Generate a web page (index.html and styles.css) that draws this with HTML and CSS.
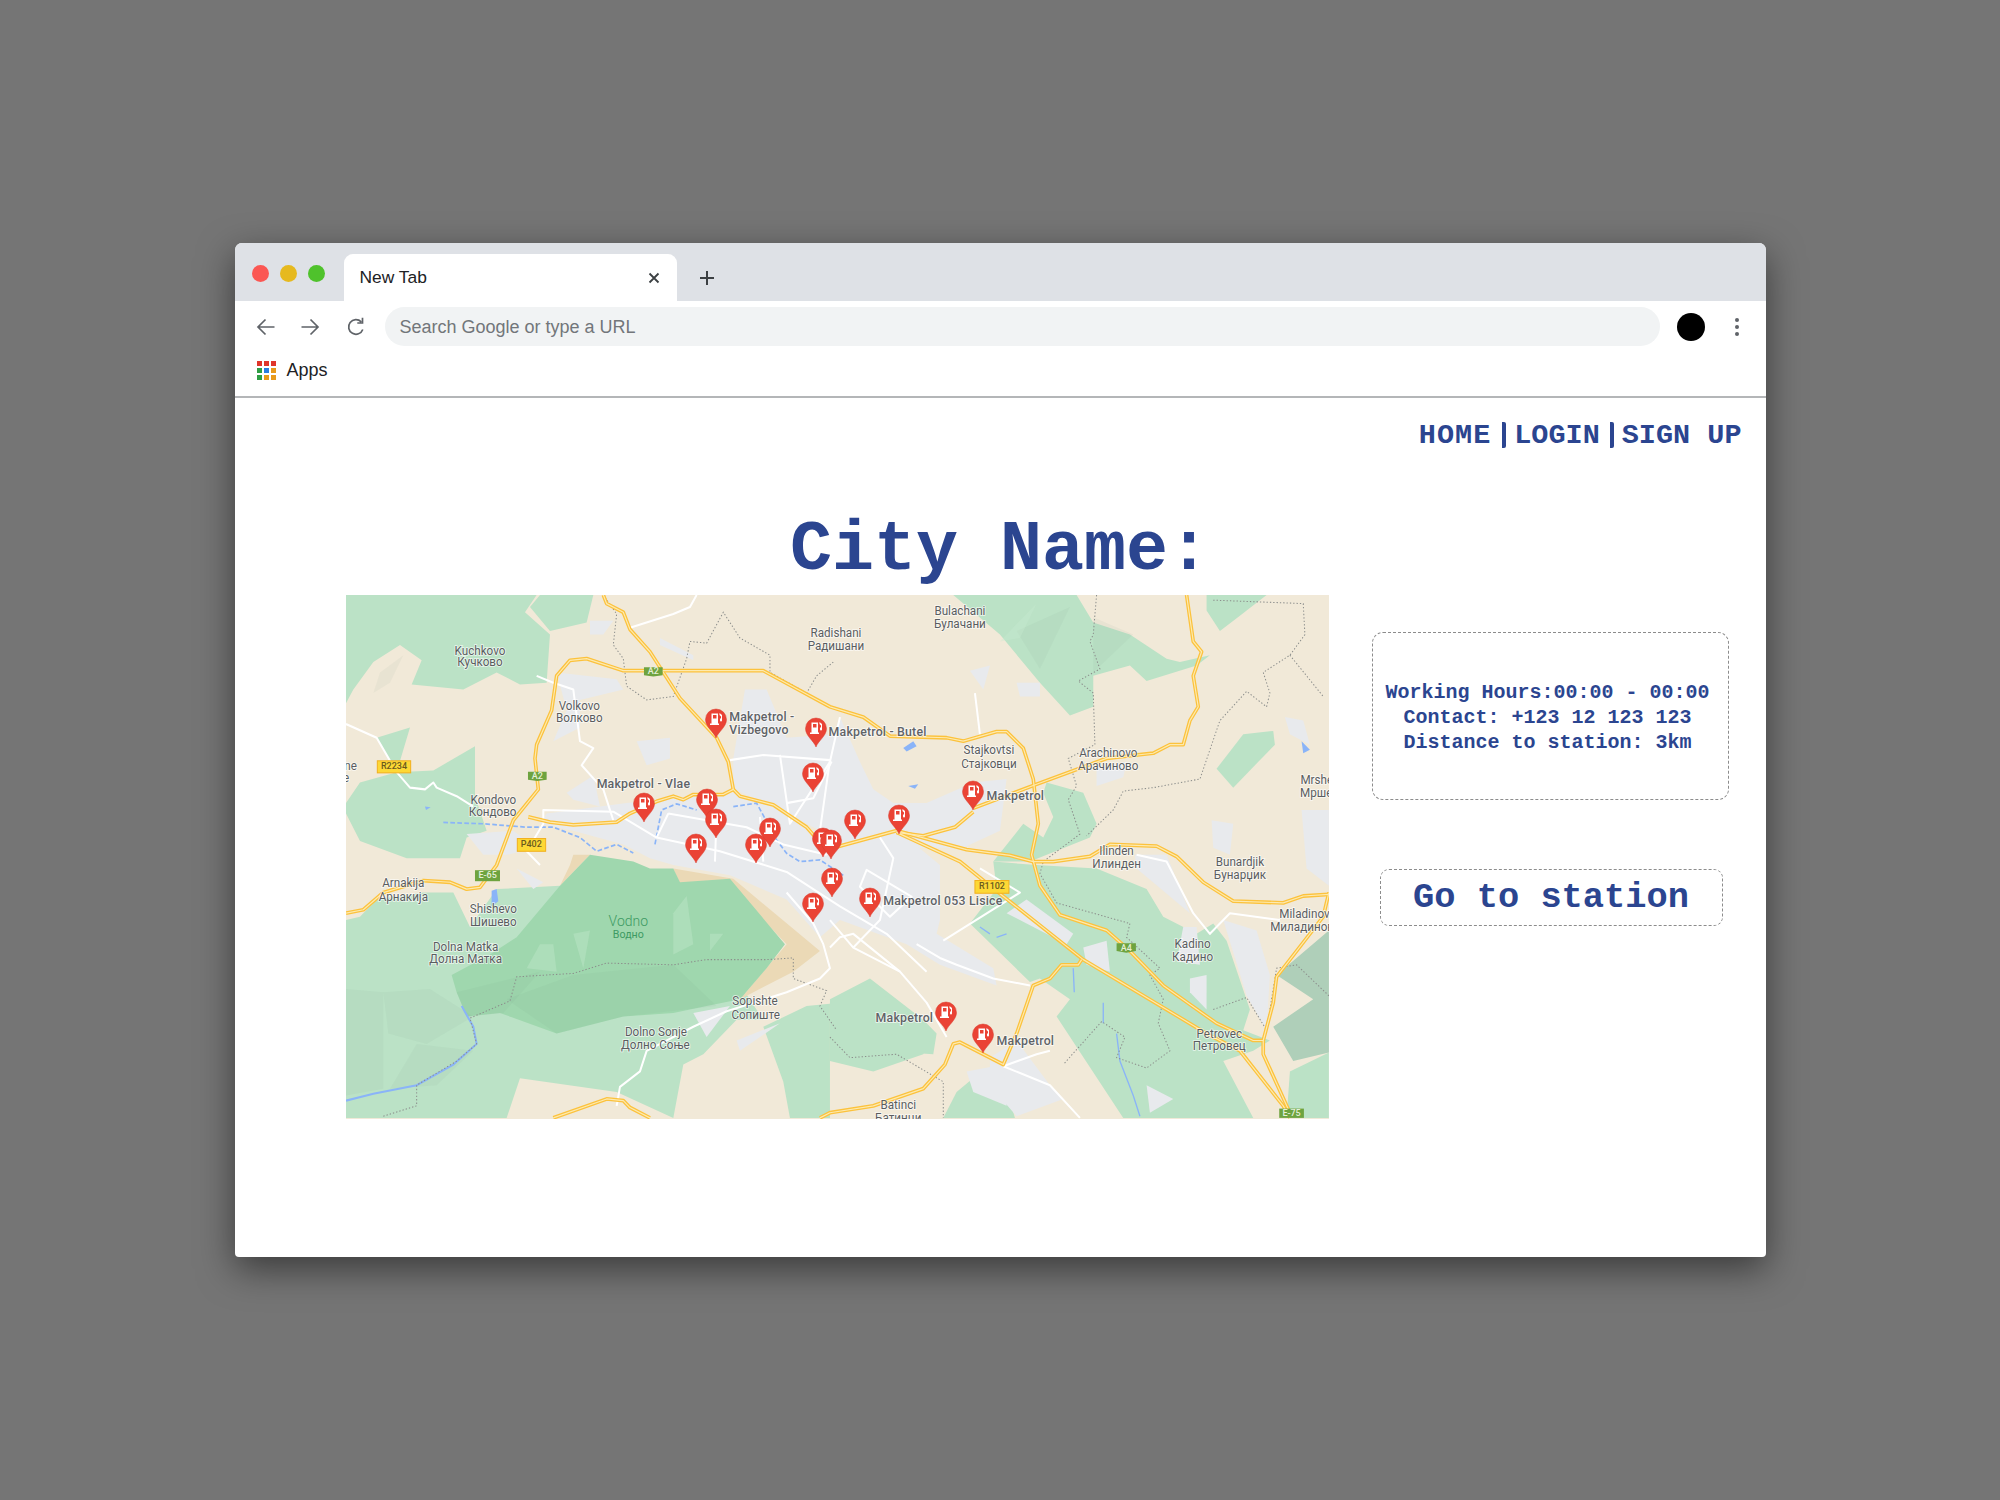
FILE: index.html
```html
<!DOCTYPE html>
<html lang="en">
<head>
  <meta charset="UTF-8" />
  <title>City Name</title>
  <link rel="stylesheet" href="styles.css">
</head>
<body>

  <div class="window">
    <div class="tabstrip">
      <div class="lights">
        <span class="light red"></span>
        <span class="light yellow"></span>
        <span class="light green"></span>
      </div>
      <div class="tab">
        <span>New Tab</span>
        <svg class="tab-close" viewBox="0 0 12 12"><path d="M1.5 1.5l9 9M10.5 1.5l-9 9"/></svg>
      </div>
      <svg class="tab-new" viewBox="0 0 16 16"><path d="M8 1v14M1 8h14"/></svg>
    </div>

    <div class="toolbar">
      <svg class="nav-icon" viewBox="0 0 24 24"><path d="M20.5 12H4M11.5 4.5L4 12l7.5 7.5"/></svg>
      <svg class="nav-icon" viewBox="0 0 24 24"><path d="M3.500 12H20M12.500 4.500L20 12l-7.500 7.500"/></svg>
      <svg class="nav-icon" viewBox="0 0 24 24"><path d="M18.800 14.500A7.300 7.300 0 1 1 17.200 6.900M18.500 2.800v5.200h-5.200"/></svg>
      <div class="address">Search Google or type a URL</div>
      <span class="avatar"></span>
      <span class="dots"><i></i><i></i><i></i></span>
    </div>

    <div class="bookmarks">
      <div class="apps-grid">
        <i class="c-red"></i><i class="c-red"></i><i class="c-red"></i>
        <i class="c-green"></i><i class="c-blue"></i><i class="c-orange"></i>
        <i class="c-green"></i><i class="c-orange"></i><i class="c-orange"></i>
      </div>
      <span>Apps</span>
    </div>

    <div class="page">
      <nav class="topnav">
        <a href="#">HOME</a>
        <a href="#">LOGIN</a>
        <a href="#">SIGN UP</a>
      </nav>

      <h1>City Name:</h1>

      <div class="content">
        <div class="map">
          <svg class="map-svg" viewBox="0 0 983 524">
            <defs>
              <symbol id="pin" overflow="visible">
                <path class="pin-body" d="M0 0C-2-6-10.500-11-10.500-18.500a10.500 10.500 0 1 1 21 0C10.500-11 2-6 0 0Z"/>
                <path class="pin-pump" d="M-4.500-24.500h6.500v10h1v1.500h-9v-1.500h1.500zM-3-23v3.500h3.500V-23zM3.500-25l2.500 2v5.500a1 1 0 0 1-2 0v-2h1v-2l-1.500-1.500z"/>
              </symbol>

              <g id="highways">
                <path d="M790 15L800 40 850 65 870 115 930 180 960 225 1020 315 1130 430 1165 500 1180 580 1200 600 1300 625 1400 690 1450 745"/>
                <path d="M18 940L70 930 130 880 250 845 330 850 380 870 420 865 470 800 520 670 595 580 585 490 590 450 635 350 650 250 690 205 740 200 850 235 970 235 1270 235 1470 340 1570 370 1650 425 1820 430 1870 440 1970 412 2000 412 2050 460 2080 550 2095 680 2075 770 2100 860 2160 945 2300 990 2370 1050 2470 1150 2630 1260 2740 1310 2770 1310 2800 1200 2810 1125 2950 950 2967 880"/>
                <path d="M565 660L630 675 700 683 830 675 870 650 950 615 1000 600 1030 610 1060 595 1150 595 1180 580"/>
                <path d="M1480 750L1670 700 1880 755 2010 772 2080 790 2140 790 2250 775 2310 740 2450 745 2510 775 2590 850 2680 905 2830 910 2890 890 2967 885"/>
                <path d="M1670 705L1860 790 1950 860 2230 1075 2480 1220 2600 1290 2700 1340 2830 1500 2850 1535"/>
                <path d="M2770 1310L2770 1350 2850 1520"/>
                <path d="M1900 645L1845 690 1750 715 1670 705"/>
                <path d="M1900 635L2090 565 2300 490 2440 475 2490 450 2530 450 2550 380 2575 340 2560 250 2585 180 2560 150 2540 15"/>
                <path d="M2225 1075L2215 1090 2165 1090 2130 1130 2080 1150 2030 1290 1990 1380 1930 1350 1860 1315 1840 1320 1815 1380 1750 1450 1600 1500 1470 1520 1440 1535"/>
                <path d="M640 1535L800 1480 850 1485 870 1505 930 1535"/>
              </g>
            </defs>

            <rect class="land" width="983" height="524"/>

            <g transform="scale(.3333 .344) translate(-18 -15)">
              <!-- green areas -->
              <g class="park">
                <polygon points="18,330 40,290 100,210 180,160 245,205 215,275 370,290 470,240 540,275 620,270 630,130 555,65 590,15 18,15"/>
                <polygon points="630,120 740,95 760,15 600,15 570,50"/>
                <polygon points="18,620 60,560 170,530 110,430 210,400 170,530 280,525 405,455 405,600 440,700 380,720 360,780 200,780 60,730 18,650"/>
                <polygon points="18,960 60,950 110,900 250,880 340,880 390,980 470,870 660,860 1100,1000 1270,1250 1190,1250 1090,1350 1030,1380 1000,1535 830,1460 540,1420 500,1535 18,1535"/>
                <polygon points="1270,1270 1400,1210 1500,1200 1620,1340 1780,1350 1790,1290 1750,1250 1590,1130 1470,1190 1470,1535 1350,1535 1330,1430"/>
                <polygon points="1840,15 2210,15 2260,95 2370,130 2480,200 2520,210 2610,190 2570,220 2420,265 2370,220 2260,250 2260,340 2190,365 2100,270 1980,130"/>
                <polygon points="2600,15 2780,15 2700,75 2640,120 2600,60"/>
                <polygon points="2630,520 2710,420 2800,410 2805,450 2680,575"/>
                <polygon points="1960,790 2050,680 2110,720 2140,660 2110,590 2120,560 2230,590 2270,680 2250,720 2070,790"/>
                <polygon points="2090,800 2270,810 2420,870 2470,950 2570,1000 2620,970 2660,1020 2730,1220 2710,1280 2790,1310 2740,1340 2650,1370 2740,1535 2350,1535 2150,1240 2190,1190 2100,1130 2070,1140 1890,970 1970,870 1960,790"/>
                <polygon points="1590,1140 1690,1230 1780,1290 1750,1350 1600,1400 1470,1370 1470,1200"/>
                <polygon points="1810,1535 1850,1460 1930,1395 2000,1450 2025,1535"/>
                <polygon points="2850,1400 2967,1345 2967,1535 2840,1535"/>
              </g>

              <polygon class="hill-dark" points="2967,990 2810,1120 2920,1190 2800,1270 2860,1370 2967,1345"/>
              <polygon class="scrub" points="1000,810 1180,840 1440,1050 1360,1110 1200,1190 1340,1030 1170,860 1020,860"/>
              <polygon class="scrub" points="700,770 750,770 660,860 690,800"/>

              <!-- vodno -->
              <polygon class="park-dark" points="530,1010 660,860 750,770 880,790 930,810 1000,810 1020,850 1170,840 1300,990 1335,1030 1280,1100 1200,1190 1100,1210 1000,1230 850,1240 650,1290 480,1230 380,1240 350,1170 335,1120 450,1060"/>

              <!-- terrain shading -->
              <g class="shade">
                <polygon points="18,1160 130,1170 130,1450 18,1470"/>
                <polygon points="130,1170 270,1160 400,1240 260,1320 145,1290"/>
                <polygon points="230,1320 400,1340 290,1440 150,1450"/>
                <polygon points="350,1170 600,1110 490,1230 380,1240"/>
                <polygon points="700,1120 1000,1090 1130,1210 850,1240 650,1290 500,1190"/>
                <polygon points="2030,120 2190,50 2150,130 2100,230"/>
                <polygon points="2260,80 2380,130 2260,240"/>
                <polygon points="120,240 190,190 150,270 100,300"/>
              </g>
              <g class="light-shade">
                <polygon points="700,1000 750,990 730,1100"/>
                <polygon points="1000,940 1040,890 1060,1030 1000,1060"/>
                <polygon points="600,1030 640,1030 650,1110 560,1100"/>
                <polygon points="1110,1000 1150,1000 1110,1050"/>
                <polygon points="1980,150 2090,40 2040,140"/>
              </g>

              <!-- built up areas -->
              <g class="urban">
                <polygon points="620,650 860,620 1180,590 1280,620 1420,700 1700,720 1800,800 1800,960 1790,1000 1960,1100 1970,1150 1800,1090 1700,1030 1500,960 1440,1010 1340,900 1170,830 1000,800 930,780 850,740 700,700 600,680"/>
                <polygon points="1180,490 1215,290 1280,290 1340,430 1480,420 1500,370 1560,500 1600,580 1660,620 1760,620 1900,560 2000,550 1980,700 1870,750 1660,750 1440,700 1280,620 1180,580"/>
                <polygon points="650,240 830,260 850,290 720,320 720,400 640,440 680,350"/>
                <polygon points="960,140 1060,190 1060,205 960,160"/>
                <polygon points="750,90 820,90 790,130 750,130"/>
                <polygon points="890,440 990,430 990,490 920,510"/>
                <polygon points="680,590 760,540 780,630 700,610"/>
                <polygon points="380,710 520,700 590,750 500,770 430,770"/>
                <polygon points="530,810 610,850 580,870"/>
                <polygon points="2615,670 2680,680 2670,770 2620,750"/>
                <polygon points="2650,960 2750,990 2790,1120 2780,1280 2720,1180"/>
                <polygon points="2530,980 2570,980 2580,1090 2510,1080"/>
                <polygon points="2230,1040 2300,1020 2310,1110 2240,1090"/>
                <polygon points="2550,1130 2600,1120 2600,1220 2550,1170"/>
                <polygon points="2420,1440 2500,1480 2430,1520"/>
                <polygon points="1950,1360 2030,1310 2130,1440 2170,1480 2030,1530 1950,1440"/>
                <polygon points="1880,1400 1990,1380 2000,1500 1900,1460"/>
                <polygon points="2385,770 2480,770 2550,940 2390,810"/>
                <polygon points="2835,370 2890,380 2910,450 2850,420"/>
                <polygon points="2885,640 2967,640 2967,860 2900,810"/>
                <polygon points="1890,235 1950,220 1930,290"/>
                <polygon points="2030,270 2100,270 2100,310 2040,310"/>
                <polygon points="2270,520 2360,500 2350,545 2270,570"/>
                <polygon points="1060,1230 1170,1210 1100,1300"/>
                <polygon points="1190,1310 1320,1260 1200,1340"/>
                <polygon points="2000,940 2060,900 2200,1000 2180,1030"/>
              </g>

              <!-- water -->
              <g class="water">
                <path d="M18 1485L100 1465 230 1440 340 1380 410 1320 400 1270 365 1210"/>
                <path class="thin" d="M2290 1200v60M2330 1290l10 80 40 100 20 60"/>
                <path class="thin" d="M2200 1100l3 70M1920 980l30 20M2000 1000l-30 10"/>
              </g>
              <g class="water dashed">
                <path d="M310 676L430 680 560 690 640 690 720 720 770 760 830 740 880 765"/>
                <path d="M945 740L965 640 1010 622 1070 640M1180 630L1250 620 1310 727 1340 766 1380 790 1440 785 1510 830"/>
              </g>
              <g class="lake">
                <polygon points="455,875 470,870 475,905 455,920"/>
                <polygon points="1690,460 1720,440 1730,455 1700,470"/>
                <polygon points="2885,440 2910,465 2890,475"/>
                <polygon points="1705,570 1735,565 1725,578"/>
                <polygon points="255,630 272,632 258,640"/>
              </g>

              <!-- borders -->
              <g class="border">
                <path d="M790 15L830 70 820 160 850 200 860 280 920 320 1000 310 1040 200 1050 150 1100 155 1150 65 1200 140 1290 190 1290 240 1400 300 1430 250 1480 210"/>
                <path d="M130 1530L230 1500 230 1440 350 1370 410 1320 390 1245 510 1195 530 1125 700 1115 800 1085 1000 1090 1100 1075 1280 1075 1360 1070 1360 1130 1460 1165 1440 1210 1490 1280"/>
                <path d="M2270 15L2260 130 2250 150 2280 230 2215 265 2260 300 2265 450 2185 490 2210 570 2185 610 2220 710 2110 790 2100 825 2150 910 2370 970 2360 1010 2460 1100 2430 1120 2470 1190 2455 1260 2490 1340 2420 1390 2330 1360 2355 1300 2285 1255 2170 1380"/>
                <path d="M2620 30L2890 40 2895 130 2850 190 2770 240 2790 300 2780 340 2720 295 2640 380 2580 550 2440 575 2350 585 2320 640 2240 715"/>
                <path d="M2850 190L2950 310"/>
                <path d="M1470 1300L1530 1360 1670 1350 1810 1430 1810 1535"/>
                <path d="M2620 1220L2720 1185 2780 1280 2810 1100 2870 1090 2967 1180"/>
              </g>

              <!-- streets -->
              <g class="street">
                <path d="M18 390L110 430 170 530 210 575 255 580 280 560 290 575 350 600 400 630"/>
                <path d="M870 110L1000 70 1050 50 1070 15"/>
                <path d="M590 250L640 270 700 290 720 440 760 460 725 510 790 580 820 670"/>
                <path d="M830 1500L840 1445 900 1400 920 1340 1060 1270 1160 1225 1340 1170 1440 1130 1470 1100 1450 1030 1420 970 1340 880"/>
                <path d="M600 800L560 760 610 680 610 640 820 645 950 720 1140 760 1340 820 1500 920 1640 1000 1760 1110"/>
                <path d="M1170 495L1270 480 1470 495 1440 700M1320 480L1350 680 1470 500 1500 370"/>
                <path d="M1340 620L1420 606 1475 499"/>
                <path d="M985 650L950 720M985 650L1220 690 1330 740 1460 770M1130 650L1125 790M1270 790L1260 660"/>
                <path d="M1470 960L1540 1040 1680 1110 1760 1200 1820 1300"/>
                <path d="M1580 814L1715 892 1650 950 1560 863Z"/>
                <path d="M1920 810L2040 880 1810 1020M1470 1040L1500 1010 1540 1000 1680 1110"/>
                <path d="M1905 300L1920 420M1620 720L1660 780 1620 960 1540 1040"/>
                <path d="M2390 770L2480 790 2560 940 2610 1000 2670 940 2820 960"/>
                <path d="M1990 1385L2130 1440 2220 1535M1990 1385L2090 1350 2130 1340"/>
                <path d="M1730 1030L1800 1070 1850 1090 1960 1130 2070 1150"/>
              </g>

              <use href="#highways" class="road-edge"/>
              <use href="#highways" class="road-core"/>

              <!-- shields -->
              <g class="shield-green">
                <polygon points="912,225 968,225 968,248 940,252 912,248"/>
                <polygon points="564,529 620,529 620,552 592,556 564,552"/>
                <rect x="405" y="815" width="75" height="32"/>
                <polygon points="2330,1027 2388,1027 2388,1050 2359,1055 2330,1050"/>
                <rect x="2818" y="1508" width="74" height="27"/>
              </g>
              <g class="shield-yellow">
                <rect x="112" y="497" width="100" height="35"/>
                <rect x="532" y="723" width="85" height="37"/>
                <rect x="1905" y="845" width="102" height="37"/>
              </g>
              <g class="shield-text light">
                <text x="940" y="245">A2</text>
                <text x="592" y="549">A2</text>
                <text x="443" y="838">E-65</text>
                <text x="2359" y="1049">A4</text>
                <text x="2855" y="1529">E-75</text>
              </g>
              <g class="shield-text dark">
                <text x="162" y="522">R2234</text>
                <text x="574" y="748">P402</text>
                <text x="1956" y="870">R1102</text>
              </g>

              <!-- place names -->
              <g class="place">
                <text x="420" y="188">Kuchkovo</text><text x="420" y="222">Кучково</text>
                <text x="718" y="350">Volkovo</text><text x="718" y="385">Волково</text>
                <text x="460" y="622">Kondovo</text><text x="458" y="658">Кондово</text>
                <text x="190" y="864">Arnakija</text><text x="190" y="904">Арнакија</text>
                <text x="460" y="940">Shishevo</text><text x="460" y="977">Шишево</text>
                <text x="377" y="1050">Dolna Matka</text><text x="377" y="1085">Долна Матка</text>
                <text x="1245" y="1208">Sopishte</text><text x="1247" y="1248">Сопиште</text>
                <text x="948" y="1296">Dolno Sonje</text><text x="946" y="1335">Долно Соње</text>
                <text x="1488" y="138">Radishani</text><text x="1488" y="176">Радишани</text>
                <text x="1860" y="74">Bulachani</text><text x="1860" y="112">Булачани</text>
                <text x="1947" y="478">Stajkovtsi</text><text x="1947" y="518">Стајковци</text>
                <text x="2305" y="486">Arachinovo</text><text x="2305" y="525">Арачиново</text>
                <text x="2330" y="772">Ilinden</text><text x="2330" y="810">Илинден</text>
                <text x="2700" y="803">Bunardjik</text><text x="2700" y="842">Бунарџик</text>
                <text x="2558" y="1041">Kadino</text><text x="2558" y="1079">Кадино</text>
                <text x="2638" y="1303">Petrovec</text><text x="2638" y="1338">Петровец</text>
                <text x="1675" y="1510">Batinci</text><text x="1675" y="1547">Батинци</text>
                <text x="2949" y="565">Mrshevo</text><text x="2949" y="603">Мршево</text>
                <text x="2907" y="955">Miladinovci</text><text x="2907" y="993">Миладиновци</text>
                <text x="32" y="525">ne</text><text x="18" y="558">e</text>
              </g>
              <text class="place-green big" x="865" y="978">Vodno</text>
              <text class="place-green" x="865" y="1012">Водно</text>

              <g class="station">
                <text x="1168" y="382">Makpetrol -</text>
                <text x="1168" y="420">Vizbegovo</text>
                <text x="770" y="575">Makpetrol - Vlae</text>
                <text x="1466" y="425">Makpetrol - Butel</text>
                <text x="1940" y="610">Makpetrol</text>
                <text x="1630" y="917">Makpetrol 053 Lisice</text>
                <text x="1607" y="1257">Makpetrol</text>
                <text x="1970" y="1322">Makpetrol</text>
              </g>
            </g>

            <use href="#pin" x="370" y="143"/>
            <use href="#pin" x="470" y="152"/>
            <use href="#pin" x="467" y="197"/>
            <use href="#pin" x="298" y="227"/>
            <use href="#pin" x="361" y="223"/>
            <use href="#pin" x="370" y="243"/>
            <use href="#pin" x="350" y="268"/>
            <use href="#pin" x="424" y="252"/>
            <use href="#pin" x="410" y="268"/>
            <use href="#pin" x="477" y="262"/>
            <use href="#pin" x="485" y="264"/>
            <use href="#pin" x="509" y="244"/>
            <use href="#pin" x="553" y="239"/>
            <use href="#pin" x="627" y="215"/>
            <use href="#pin" x="486" y="302"/>
            <use href="#pin" x="467" y="327"/>
            <use href="#pin" x="524" y="322"/>
            <use href="#pin" x="600" y="436"/>
            <use href="#pin" x="637" y="458"/>
          </svg>
        </div>

        <aside class="side">
          <div class="info">
            Working Hours:00:00 - 00:00<br>
            Contact: +123 12 123 123<br>
            Distance to station: 3km
          </div>
          <a class="go-btn" href="#">Go to station</a>
        </aside>
      </div>
    </div>
  </div>

</body>
</html>
```

FILE: styles.css
```css
* {
  box-sizing: border-box;
}

body {
  margin: 0;
  height: 100vh;
  background: #757575;
  display: flex;
  align-items: center;
  justify-content: center;
  font-family: 'Liberation Sans', sans-serif;
  overflow: hidden;
}

.window {
  width: 1531px;
  height: 1014px;
  background: white;
  border-radius: 7px 7px 4px 4px;
  box-shadow: 0 12px 36px rgba(0,0,0,0.5);
  overflow: hidden;
  display: flex;
  flex-direction: column;
}

/* browser chrome */
.tabstrip {
  height: 58px;
  flex: none;
  background: #dee1e6;
  display: flex;
  align-items: flex-end;
}

.lights {
  width: 109px;
  height: 47px;
  padding: 11px 0 0 17px;
  display: flex;
  gap: 11px;
}

.light {
  width: 17px;
  height: 17px;
  border-radius: 50%;
}

.red { background: #fb5753; }
.yellow { background: #e6b91f; }
.green { background: #4fc22c; }

.tab {
  width: 333px;
  height: 47px;
  background: white;
  border-radius: 9px 9px 0 0;
  padding: 0 17px 0 16px;
  display: flex;
  align-items: center;
  justify-content: space-between;
  font-size: 17.4px;
  color: #202124;
}

.tab-close {
  width: 12px;
  height: 12px;
  fill: none;
  stroke: #3c4043;
  stroke-width: 1.8;
}

.tab-new {
  width: 16px;
  height: 16px;
  margin: 0 0 15px 22px;
  fill: none;
  stroke: #3c4043;
  stroke-width: 2;
}

.toolbar {
  height: 50px;
  flex: none;
  display: flex;
  align-items: center;
  padding: 0 27px 0 19px;
}

.nav-icon {
  width: 24px;
  height: 24px;
  margin: 2px 20px 0 0;
  fill: none;
  stroke: #5f6368;
  stroke-width: 1.7;
  flex: none;
}

.nav-icon:nth-child(2) {
  margin-right: 22px;
}

.nav-icon:nth-child(3) {
  margin-right: 17px;
}

.address {
  flex: 1;
  height: 39px;
  line-height: 41px;
  padding-left: 15px;
  background: #f1f3f4;
  border-radius: 20px;
  font-size: 18px;
  color: #72767a;
}

.avatar {
  width: 28px;
  height: 28px;
  margin: 1px 0 0 17px;
  background: black;
  border-radius: 50%;
}

.dots {
  margin: 1px 0 0 30px;
  display: flex;
  flex-direction: column;
  gap: 3px;
}

.dots i {
  width: 4px;
  height: 4px;
  background: #5f6368;
  border-radius: 50%;
}

.bookmarks {
  height: 47px;
  flex: none;
  padding: 0 0 6px 22px;
  border-bottom: 2px solid #b4b6b8;
  display: flex;
  align-items: center;
  gap: 11px;
  font-size: 18px;
  color: #202124;
}

.apps-grid {
  width: 19px;
  display: grid;
  grid-template-columns: repeat(3, 5px);
  gap: 2px;
}

.apps-grid i {
  height: 5px;
}

.c-red { background: #e0352b; }
.c-green { background: #2f9e44; }
.c-blue { background: #2a7de1; }
.c-orange { background: #e89a1c; }

/* page */
.page {
  flex: 1;
  color: #2b4590;
  font-family: 'Liberation Mono', monospace;
  font-weight: bold;
}

.topnav {
  height: 50px;
  padding: 24px 24px 0 0;
  display: flex;
  justify-content: flex-end;
  font-size: 28.5px;
  line-height: 27px;
}

.topnav a {
  color: inherit;
  text-decoration: none;
  padding-right: 10px;
  margin-right: 8px;
  border-right: 4px solid #2b4590;
  border-radius: 2px;
}

.topnav a:first-child {
  letter-spacing: 1px;
  padding-right: 11px;
}

.topnav a:last-child {
  padding: 0;
  margin: 0;
  border: none;
}

h1 {
  margin: 63px 0 4px;
  font-size: 70px;
  line-height: 80px;
  text-align: center;
}

.content {
  display: flex;
  align-items: flex-start;
  gap: 43px;
  padding-left: 111px;
}

.map {
  width: 983px;
  height: 524px;
  flex: none;
}

.map-svg {
  display: block;
  width: 983px;
  height: 524px;
}

.side {
  width: 357px;
  padding-top: 37px;
  display: flex;
  flex-direction: column;
  align-items: center;
  gap: 69px;
}

.info {
  width: 357px;
  height: 168px;
  border: 1px dashed #8c8c8c;
  border-radius: 11px;
  padding: 47px 5px 0 0;
  text-align: center;
  font-size: 20px;
  line-height: 25px;
}

.go-btn {
  width: 343px;
  height: 57px;
  margin-left: 2px;
  border: 1px dashed #8c8c8c;
  border-radius: 9px;
  color: inherit;
  text-decoration: none;
  text-align: center;
  font-size: 35.4px;
  line-height: 56px;
}

/* map colours */
.land { fill: #f1e9d8; }
.park polygon { fill: #bbe2c6; }
.park-dark { fill: #9fd7ae; }
.hill-dark { fill: #afcfb9; }
.scrub { fill: #ebd9b6; }
.shade polygon { fill: #5f8f70; opacity: 0.06; }
.light-shade polygon { fill: #c9ecd2; opacity: 0.35; }
.urban polygon { fill: #e8eaed; }

.water path {
  fill: none;
  stroke: #8ab4f8;
  stroke-width: 6;
}

.water .thin { stroke-width: 4; }
.water.dashed path { stroke-dasharray: 14 7; stroke-width: 5; }
.lake polygon { fill: #8ab4f8; }

.border path {
  fill: none;
  stroke: #8b8d8b;
  stroke-width: 3;
  stroke-dasharray: 4 6;
}

.street path {
  fill: none;
  stroke: white;
  stroke-width: 6;
  stroke-linejoin: round;
}

.road-edge, .road-core {
  fill: none;
  stroke-linejoin: round;
}

.road-edge { stroke: #fcc23c; stroke-width: 11; }
.road-core { stroke: #fdeab0; stroke-width: 3.5; }

.shield-green polygon, .shield-green rect { fill: #6ea33f; }
.shield-yellow rect { fill: #fdd835; stroke: #f2b01e; stroke-width: 3; }

.shield-text text {
  font-family: Roboto, sans-serif;
  font-size: 27px;
  font-weight: 500;
  text-anchor: middle;
}

.shield-text.light { fill: #e4efd8; }
.shield-text.dark { fill: #6a5a1e; }

.place text {
  font-family: Roboto, sans-serif;
  font-size: 35px;
  font-weight: 400;
  fill: #5a5d60;
  text-anchor: middle;
  paint-order: stroke;
  stroke: white;
  stroke-width: 5;
  stroke-opacity: 0.7;
}

.place-green {
  font-family: Roboto, sans-serif;
  font-size: 32px;
  font-weight: 400;
  fill: #3d9a63;
  text-anchor: middle;
}

.place-green.big { font-size: 42px; font-weight: 300; }

.station text {
  font-family: Roboto, sans-serif;
  font-size: 37px;
  font-weight: 500;
  fill: #606367;
  letter-spacing: 0.6px;
  paint-order: stroke;
  stroke: white;
  stroke-width: 5;
  stroke-opacity: 0.75;
}

.pin-body { fill: #ea4335; stroke: #d93a2c; stroke-width: 0.5; }
.pin-pump { fill: white; fill-rule: evenodd; }
```
